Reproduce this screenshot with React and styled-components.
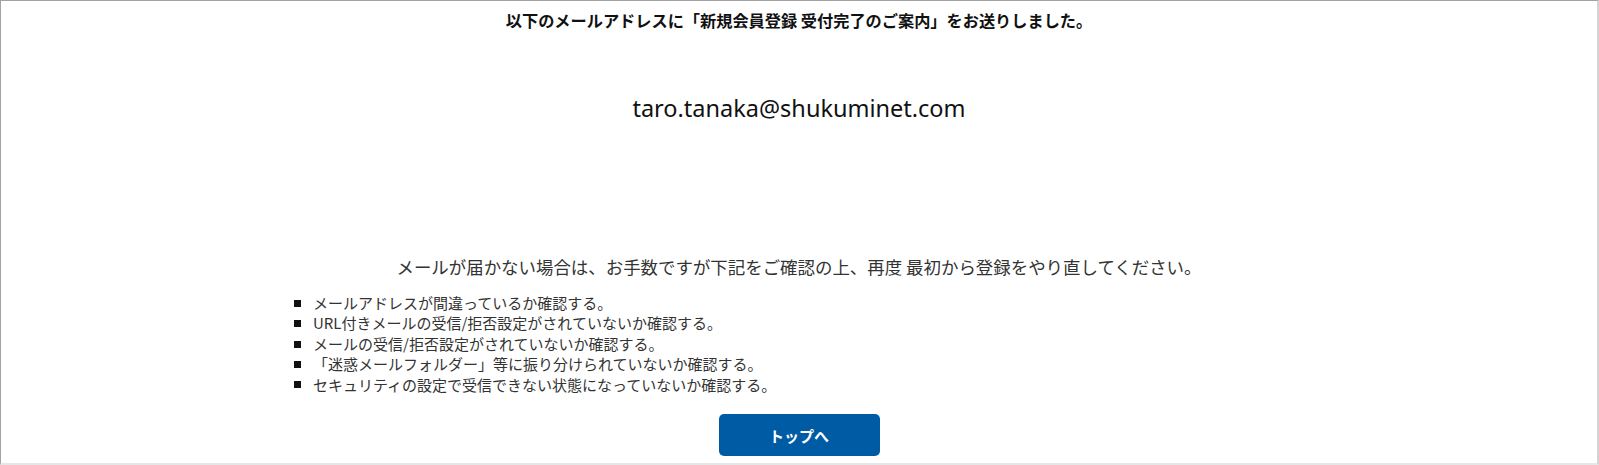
import React from "react";
import styled, { createGlobalStyle } from "styled-components";

const Global = createGlobalStyle`
  html, body { margin: 0; padding: 0; background: #fff; }
  body { font-family: "Noto Sans", "Noto Sans CJK JP", sans-serif; color: #222; }
`;

const Frame = styled.div`
  box-sizing: border-box;
  width: 1599px;
  height: 465px;
  border-top: 1px solid #a3a3a3;
  border-left: 1px solid #a3a3a3;
  border-right: 2px solid #d4d4d4;
  border-bottom: 2px solid #e6e6e6;
  display: flex;
  flex-direction: column;
  align-items: center;
  overflow: hidden;
`;

const Heading = styled.p`
  margin: 9px 0 0;
  font-family: "Noto Sans CJK JP", sans-serif;
  font-size: 16.2px;
  font-weight: 700;
  line-height: 20px;
  color: #111;
`;

const Email = styled.p`
  margin: 63px 0 0;
  font-family: "Noto Sans", "Noto Sans CJK JP", sans-serif;
  font-size: 23.5px;
  line-height: 30px;
  color: #111;
`;

const Notice = styled.p`
  margin: 132px 0 0;
  font-family: "Noto Sans CJK JP", sans-serif;
  font-size: 17.45px;
  line-height: 24px;
  color: #333;
`;

const List = styled.ul`
  list-style: none;
  margin: 14px 0 0;
  padding: 0 0 0 293px;
  align-self: stretch;
  display: flex;
  flex-direction: column;
`;

const Item = styled.li`
  display: flex;
  align-items: center;
  gap: 12px;
  font-family: "Noto Sans CJK JP", sans-serif;
  font-size: 15px;
  line-height: 20.4px;
  color: #333;
  &::before {
    content: "";
    width: 7px;
    height: 7px;
    background: #111;
    flex: none;
  }
`;

const Button = styled.button`
  margin-top: 19px;
  width: 161px;
  height: 42px;
  border: none;
  border-radius: 5px;
  background: #005ba5;
  color: #fff;
  font-family: "Noto Sans CJK JP", sans-serif;
  font-size: 15px;
  font-weight: 700;
  cursor: pointer;
`;

const items = [
  "メールアドレスが間違っているか確認する。",
  "URL付きメールの受信/拒否設定がされていないか確認する。",
  "メールの受信/拒否設定がされていないか確認する。",
  "「迷惑メールフォルダー」等に振り分けられていないか確認する。",
  "セキュリティの設定で受信できない状態になっていないか確認する。",
];

export default function App() {
  return (
    <>
      <Global />
      <Frame>
        <Heading>以下のメールアドレスに「新規会員登録 受付完了のご案内」をお送りしました。</Heading>
        <Email>taro.tanaka@shukuminet.com</Email>
        <Notice>メールが届かない場合は、お手数ですが下記をご確認の上、再度 最初から登録をやり直してください。</Notice>
        <List>
          {items.map((t) => (
            <Item key={t}>{t}</Item>
          ))}
        </List>
        <Button type="button">トップへ</Button>
      </Frame>
    </>
  );
}
